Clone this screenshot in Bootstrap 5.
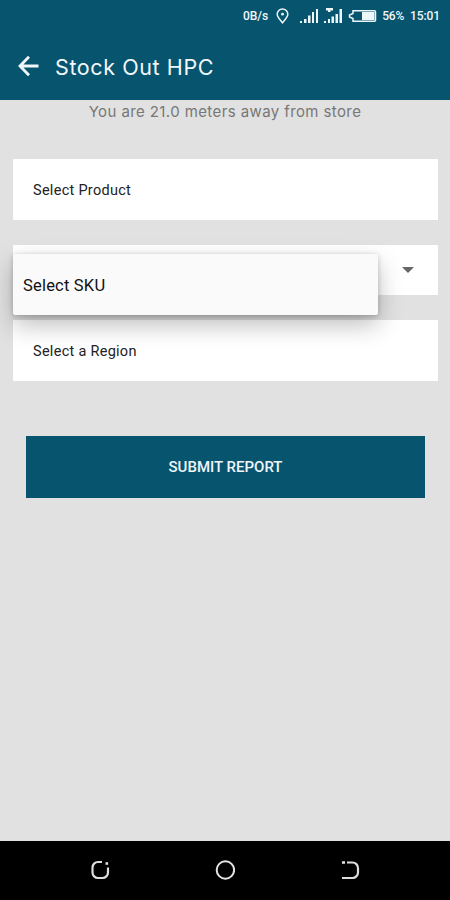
<!DOCTYPE html>
<html lang="en">
<head>
    <meta charset="UTF-8">
    <meta name="viewport" content="width=device-width, initial-scale=1.0">
    <title>Stock Out HPC</title>
    <link rel="stylesheet" href="https://cdn.jsdelivr.net/npm/bootstrap@5.3.0/dist/css/bootstrap.min.css">

    <style>
        body {
            background-color: #e1e1e1;
            font-family: Roboto, "Liberation Sans", sans-serif;
            color: #222;
        }

        svg {
            display: block;
            flex: none;
        }

        .screen {
            height: 900px;
            overflow: hidden;
        }

        .top-area {
            height: 100px;
            background: #07546f;
            color: #f1f8fb;
        }

        .status-bar {
            height: 32px;
            padding-right: 10px;
            font-size: 12px;
            line-height: 32px;
            font-weight: 500;
        }

        .signal-icon {
            margin-left: 10px;
        }

        .battery-icon,
        .battery-text {
            margin-left: 5px;
        }

        .battery-text {
            letter-spacing: -0.2px;
        }

        .clock-text {
            margin-left: 6px;
            letter-spacing: -0.1px;
        }

        .app-bar {
            height: 68px;
            padding: 0 0 0 18px;
        }

        .app-title {
            margin: 2px 0 0 16px;
            font-family: Inter, sans-serif;
            font-size: 21.5px;
            line-height: 28px;
            letter-spacing: 0.6px;
        }

        .distance {
            font-family: Inter, sans-serif;
            font-size: 15px;
            line-height: 24px;
            height: 59px;
            color: #777;
            letter-spacing: 0.4px;
        }

        .form-area {
            padding: 0 12px 0 13px;
        }

        .field {
            height: 61px;
            padding: 3px 20px 0;
            background: #fff;
            font-size: 14.5px;
            letter-spacing: 0.28px;
        }

        .sku-field {
            height: 50px;
            margin: 25px 0;
            padding: 0 24px 0 0;
        }

        /* open dropdown over the SKU field */
        .sku-menu {
            left: 0;
            top: 9px;
            width: 365px;
            height: 61px;
            padding: 3px 0 0 10px;
            background: #fafafa;
            color: #111;
            font-size: 16.5px;
            letter-spacing: 0.2px;
            border-radius: 2px;
            box-shadow: 0 10px 24px rgba(0, 0, 0, .26), 0 1px 5px rgba(0, 0, 0, .2);
            z-index: 2;
        }

        .btn-submit {
            margin: 55px 13px 0 13px;
            height: 62px;
            border: 0;
            background: #07546f;
            color: #eef6fa;
            font-size: 15px;
            font-weight: 500;
        }

        .nav-keys {
            height: 59px;
            padding: 0 90px 1px;
            background: #000;
        }
    </style>
</head>
<body>

    <div class="screen d-flex flex-column">
        <header class="top-area">
            <div class="status-bar d-flex align-items-center justify-content-end">
                <span>0B/s</span>
                <svg class="ms-2" width="13" height="16" viewBox="0 0 13 16" fill="none" stroke="#eef6fa" stroke-width="1.5">
                    <path d="M6.5 14.7C3.8 11.4 1.2 9 1.2 6.2a5.3 5.3 0 0 1 10.6 0c0 2.8-2.6 5.2-5.3 8.5z"/>
                    <circle cx="6.5" cy="6.2" r="1.4" fill="#eef6fa" stroke="none"/>
                </svg>
                <!-- Signal bars, two SIMs -->
                <svg class="signal-icon" width="44" height="18" viewBox="0 0 44 18" fill="#eef6fa">
                    <path d="M1 14h2v2H1zM5 12h2.5v4H5zM9 8.5h2.5V16H9zM13 5h2v11h-2zM17 2h2v14h-2z"/>
                    <path d="M25 14h2v2h-2zM29 12h2v4h-2zM32.500 9.500H35V16h-2.500zM36.500 7H39v9h-2.500zM40.500 2H43v14h-2.500zM27 1h7v2.500h-2.500V5H29V3.500h-2z"/>
                </svg>
                <svg class="battery-icon" width="29" height="14" viewBox="0 0 29 14">
                    <path d="M5 1.800h21.500a1 1 0 0 1 1 1v8.400a1 1 0 0 1-1 1H5V9.500L1.500 8V6L5 4.500z" fill="none" stroke="#eef6fa" stroke-width="1.500"/>
                    <path d="M14 3h12.500v8H14z" fill="#eef6fa"/>
                </svg>
                <span class="battery-text">56%</span>
                <span class="clock-text">15:01</span>
            </div>
            <div class="app-bar d-flex align-items-center">
                <svg width="21" height="22" viewBox="0 0 21 22" fill="none" stroke="#f1f8fb" stroke-width="2.800">
                    <path d="M20.500 11H2.500M11 1.800L2 11l9 9.200"/>
                </svg>
                <h1 class="app-title fw-normal">Stock Out HPC</h1>
            </div>
        </header>

        <main class="flex-grow-1">
            <p class="distance text-center mb-0">You are 21.0 meters away from store</p>
            <div class="form-area">
                <div class="field d-flex align-items-center"><span>Select Product</span></div>
                <div class="field sku-field position-relative d-flex align-items-center justify-content-end">
                    <svg width="12" height="6" viewBox="0 0 12 6"><path d="M0 0h12L6 6z" fill="#666"/></svg>
                    <div class="sku-menu position-absolute d-flex align-items-center"><span>Select SKU</span></div>
                </div>
                <div class="field d-flex align-items-center"><span>Select a Region</span></div>
                <div class="d-grid">
                    <button type="button" class="btn btn-submit rounded-0">SUBMIT REPORT</button>
                </div>
            </div>
        </main>

        <footer class="nav-keys d-flex align-items-center justify-content-between">
            <svg width="20" height="20" viewBox="0 0 20 20" fill="none" stroke="#ddd" stroke-width="2.200">
                <path d="M12 2H8a5.500 5.500 0 0 0-5.500 5.500v5A5.500 5.500 0 0 0 8 18h4.500a5.500 5.500 0 0 0 5.500-5.500V7.500"/>
                <path d="M15.500 3.500h2.600" stroke-width="2.600"/>
            </svg>
            <svg width="20" height="20" viewBox="0 0 20 20" fill="none" stroke="#e4e4e4" stroke-width="2">
                <circle cx="10.4" cy="10" r="8.700"/>
            </svg>
            <svg width="20" height="20" viewBox="0 0 20 20" fill="none" stroke="#ddd" stroke-width="2.200">
                <path d="M7 2.500h5.500A5.500 5.500 0 0 1 18 8v4.500a5.500 5.500 0 0 1-5.500 5.500H2"/>
                <path d="M2 2.500h3" stroke-width="2.600"/>
            </svg>
        </footer>
    </div>

    <script src="https://cdn.jsdelivr.net/npm/bootstrap@5.3.0/dist/js/bootstrap.bundle.min.js"></script>
</body>
</html>
